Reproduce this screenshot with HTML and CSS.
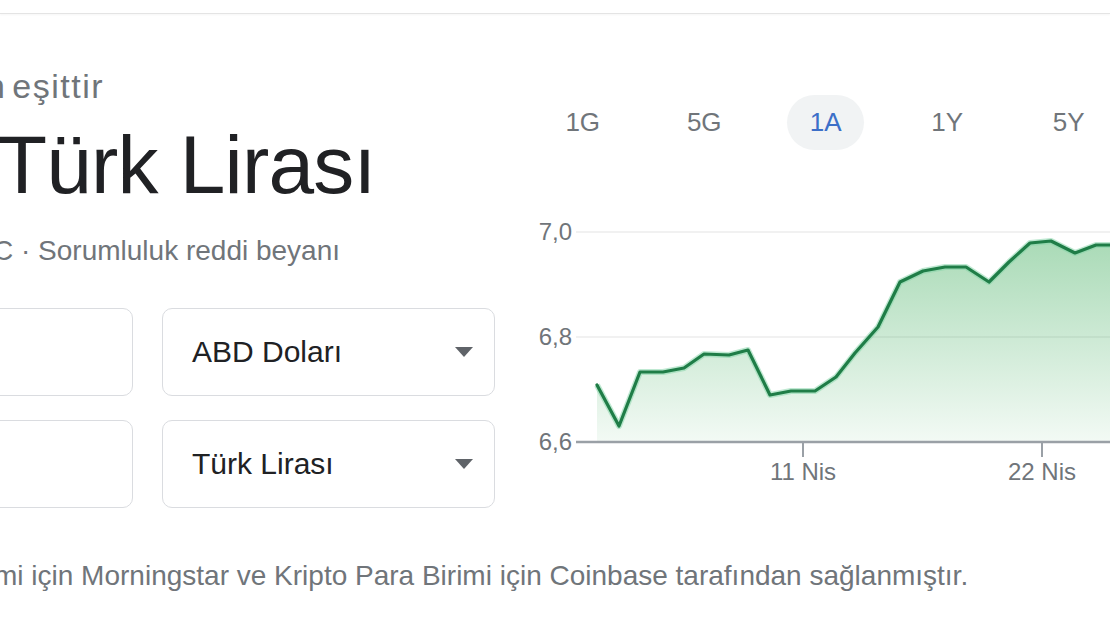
FILE: index.html
```html
<!DOCTYPE html>
<html lang="tr">
<head>
<meta charset="utf-8">
<title>Döviz çevirici</title>
<link rel="stylesheet" href="styles.css">
</head>
<body>
<div class="top"></div>
<main class="card">
  <div class="cols">
    <section class="left">
      <div class="equals">n eşittir</div>
      <div class="big">Türk Lirası</div>
      <div class="source">C · Sorumluluk reddi beyanı</div>
      <div class="rows">
        <div class="field"></div>
        <div class="field select"><span>ABD Doları</span><i class="caret"></i></div>
        <div class="field"></div>
        <div class="field select"><span>Türk Lirası</span><i class="caret"></i></div>
      </div>
    </section>
    <section class="right">
      <div class="tabs">
        <div class="tab"><span>1G</span></div>
        <div class="tab"><span>5G</span></div>
        <div class="tab active"><span>1A</span></div>
        <div class="tab"><span>1Y</span></div>
        <div class="tab"><span>5Y</span></div>
      </div>
      <svg class="chart" viewBox="0 0 590 300" width="590" height="300">
        <defs>
          <linearGradient id="fillg" x1="0" y1="0" x2="0" y2="1">
            <stop offset="0" stop-color="#34a853" stop-opacity="0.42"/>
            <stop offset="1" stop-color="#34a853" stop-opacity="0.06"/>
          </linearGradient>
        </defs>
        <line class="grid" x1="56" y1="32" x2="590" y2="32"/>
        <line class="grid" x1="56" y1="137" x2="590" y2="137"/>
        <text class="axis" x="52" y="40" text-anchor="end">7,0</text>
        <text class="axis" x="52" y="145" text-anchor="end">6,8</text>
        <text class="axis" x="52" y="250" text-anchor="end">6,6</text>
        <polygon fill="url(#fillg)" points="77,185 99,226 120,172 143,172 164,168 184,154 209,155 228,150 250,195 271,191 295,191 316,177 335,153 358,127 380,82 403,71 425,67 446,67 469,82 489,62 510,43 531,41 555,53 576,45 590,45 590,242 77,242"/>
        <polyline class="halo" points="77,185 99,226 120,172 143,172 164,168 184,154 209,155 228,150 250,195 271,191 295,191 316,177 335,153 358,127 380,82 403,71 425,67 446,67 469,82 489,62 510,43 531,41 555,53 576,45 590,45"/>
        <polyline class="line" points="77,185 99,226 120,172 143,172 164,168 184,154 209,155 228,150 250,195 271,191 295,191 316,177 335,153 358,127 380,82 403,71 425,67 446,67 469,82 489,62 510,43 531,41 555,53 576,45 590,45"/>
        <line class="base" x1="56" y1="242" x2="590" y2="242"/>
        <line class="tick" x1="283" y1="242" x2="283" y2="257"/>
        <line class="tick" x1="522" y1="242" x2="522" y2="257"/>
        <text class="axis" x="283" y="280" text-anchor="middle">11 Nis</text>
        <text class="axis" x="522" y="280" text-anchor="middle">22 Nis</text>
      </svg>
    </section>
  </div>
  <p class="footer">mi için Morningstar ve Kripto Para Birimi için Coinbase tarafından sağlanmıştır.</p>
</main>
</body>
</html>
```
FILE: styles.css
```css
html, body {
  margin: 0;
  padding: 0;
}
body {
  width: 1110px;
  height: 625px;
  overflow: hidden;
  background: #ffffff;
  font-family: "Liberation Sans", Arial, sans-serif;
}
.top {
  height: 13px;
  border-bottom: 1px solid #e4e4e4;
  box-shadow: 0 1px 2px rgba(0, 0, 0, 0.04);
}
.cols {
  display: flex;
}
.left {
  width: 520px;
  flex: none;
}
.equals {
  margin: 53px 0 0 -14px;
  font-size: 34px;
  line-height: 38px;
  color: #70757a;
  letter-spacing: 1.5px;
  word-spacing: -5px;
  white-space: nowrap;
}
.big {
  margin: 15px 0 0 -3px;
  font-size: 82px;
  line-height: 90px;
  color: #202124;
  letter-spacing: -0.8px;
  white-space: nowrap;
}
.source {
  margin: 25px 0 0 -7px;
  font-size: 28px;
  line-height: 32px;
  color: #70757a;
  white-space: nowrap;
}
.rows {
  margin: 41px 0 0 -20px;
  display: grid;
  grid-template-columns: 153px 333px;
  column-gap: 29px;
  row-gap: 24px;
}
.field {
  height: 88px;
  box-sizing: border-box;
  border: 1px solid #dadce0;
  border-radius: 10px;
}
.select {
  display: flex;
  align-items: center;
  justify-content: space-between;
  padding: 0 21px 0 29px;
  font-size: 30px;
  color: #202124;
}
.caret {
  width: 0;
  height: 0;
  border-left: 9.5px solid transparent;
  border-right: 9.5px solid transparent;
  border-top: 10px solid #5f6368;
}
.right {
  flex: 1;
}
.tabs {
  display: flex;
  margin: 81px 0 0 2px;
}
.tab {
  width: 121.5px;
  flex: none;
  display: flex;
  justify-content: center;
}
.tab span {
  width: 77px;
  height: 55px;
  line-height: 55px;
  text-align: center;
  border-radius: 28px;
  font-size: 26px;
  color: #70757a;
}
.tab.active span {
  background: #f1f3f4;
  color: #3c6fc8;
}
.chart {
  display: block;
  margin-top: 50px;
}
.grid {
  stroke: #ececec;
  stroke-width: 1.5;
}
.base {
  stroke: #9aa0a6;
  stroke-width: 2.5;
}
.tick {
  stroke: #9aa0a6;
  stroke-width: 2;
}
.axis {
  font-family: "Liberation Sans", Arial, sans-serif;
  font-size: 24px;
  fill: #70757a;
}
.halo {
  fill: none;
  stroke: #7fd3a6;
  stroke-opacity: 0.5;
  stroke-width: 6;
  stroke-linejoin: round;
}
.line {
  fill: none;
  stroke: #1f7d47;
  stroke-width: 3.2;
  stroke-linejoin: round;
  stroke-linecap: round;
}
.footer {
  margin: 52px 0 0 -6px;
  font-size: 28px;
  line-height: 32px;
  color: #70757a;
  white-space: nowrap;
}
```
